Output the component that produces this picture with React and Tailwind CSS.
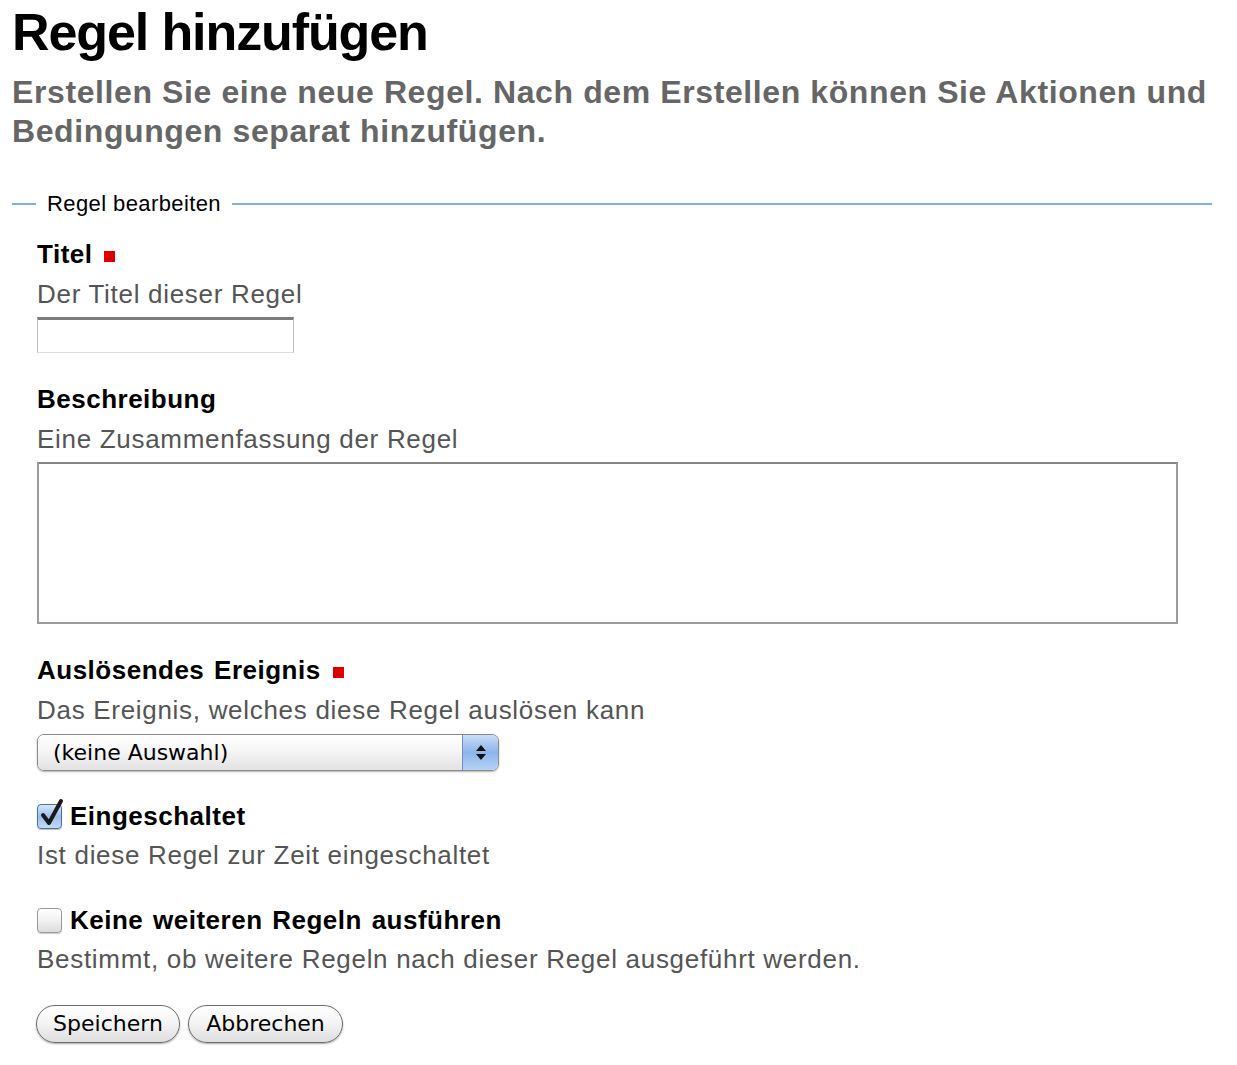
import React, { useState } from 'react';

// Rote Markierung fuer Pflichtfelder
const Required = () => (
  <span className="inline-block w-[11px] h-[11px] bg-[#dd0000] ml-[12px] mb-[1px] align-baseline" />
);

const Label = ({ children, required, tight }) => (
  <div
    className={
      (tight ? 'leading-[38px] ' : 'leading-[40px] ') +
      'text-[26px] font-bold text-black tracking-[0.5px] [word-spacing:2px]'
    }
  >
    {children}
    {required && <Required />}
  </div>
);

const Help = ({ children }) => (
  <div className="text-[26px] leading-[40px] text-[#555555] tracking-[0.7px]">{children}</div>
);

const AquaCheckbox = ({ checked, onChange }) => (
  <button
    type="button"
    onClick={onChange}
    className={
      checked
        ? 'relative w-[25px] h-[25px] rounded-[4px] border border-[#4a6fa5] bg-gradient-to-b from-[#d6e6fb] via-[#9cbfee] to-[#c2daf7] shadow-[0_1px_1px_rgba(0,0,0,0.25)] shrink-0'
        : 'relative w-[25px] h-[25px] rounded-[4px] border border-[#9a9a9a] bg-gradient-to-b from-[#ffffff] via-[#f1f1f1] to-[#dcdcdc] shadow-[0_1px_1px_rgba(0,0,0,0.2)] shrink-0'
    }
  >
    {checked && (
      <svg viewBox="0 0 26 30" className="absolute left-[1px] top-[-7px] w-[26px] h-[30px]">
        <path d="M4 17 L10 25 L22 3" fill="none" stroke="#1a1a1a" strokeWidth="4" strokeLinecap="round" strokeLinejoin="round" />
      </svg>
    )}
  </button>
);

const AquaButton = ({ children, className }) => (
  <button
    type="button"
    className={
      'h-[38px] rounded-full border border-[#6d6d6d] bg-gradient-to-b from-[#ffffff] via-[#f3f3f3] to-[#dedede] shadow-[0_1px_2px_rgba(0,0,0,0.35)] text-[22px] leading-none text-black ' +
      className
    }
    style={{ fontFamily: '"DejaVu Sans", sans-serif' }}
  >
    {children}
  </button>
);

const App = () => {
  const [title, setTitle] = useState('');
  const [description, setDescription] = useState('');
  const [enabled, setEnabled] = useState(true);
  const [stopAfter, setStopAfter] = useState(false);

  return (
    <div className="min-h-screen bg-white px-[12px]" style={{ fontFamily: '"Liberation Sans", Arial, sans-serif' }}>
      <h1 className="mt-[2px] text-[52px] leading-[60px] font-bold text-black tracking-[-1.1px]">Regel hinzufügen</h1>
      <p className="mt-[11px] w-[1200px] text-[32px] leading-[39px] font-bold text-[#666666] tracking-[0.6px]">
        Erstellen Sie eine neue Regel. Nach dem Erstellen können Sie Aktionen und Bedingungen separat hinzufügen.
      </p>

      <form className="w-[1200px] mt-[38px]">
        {/* Legende: Regel bearbeiten */}
        <div className="flex items-center h-[30px]">
          <div className="w-[24px] h-[2px] bg-[#7eb0e2]" />
          <span className="mx-[11px] text-[22px] leading-[30px] text-black tracking-[0.4px]">Regel bearbeiten</span>
          <div className="flex-1 h-[2px] bg-[#7eb0e2]" />
        </div>

        <div className="pl-[25px] pt-[15px]">
          <Label required>Titel</Label>
          <Help>Der Titel dieser Regel</Help>
          <input
            type="text"
            value={title}
            onChange={(e) => setTitle(e.target.value)}
            className="mt-[3px] block w-[257px] h-[36px] border border-[#c4c4c4] border-t-[3px] border-t-[#7c7c7c] border-b-[#dddddd] bg-white outline-none"
          />

          <div className="mt-[26px]">
            <Label>Beschreibung</Label>
            <Help>Eine Zusammenfassung der Regel</Help>
            <textarea
              value={description}
              onChange={(e) => setDescription(e.target.value)}
              className="mt-[3px] block w-[1141px] h-[162px] border-2 border-[#9c9c9c] border-t-[#858585] bg-white resize-none outline-none"
            />
          </div>

          <div className="mt-[26px]">
            <Label required>Auslösendes Ereignis</Label>
            <Help>Das Ereignis, welches diese Regel auslösen kann</Help>
            <div className="mt-[4px] flex w-[462px] h-[37px] rounded-[7px] border border-[#8a8a8a] overflow-hidden shadow-[0_1px_2px_rgba(0,0,0,0.3)]">
              <div
                className="flex-1 flex items-center pl-[15px] bg-gradient-to-b from-[#ffffff] via-[#f4f4f4] to-[#e2e2e2] text-[22px] text-black"
                style={{ fontFamily: '"DejaVu Sans", sans-serif' }}
              >
                (keine Auswahl)
              </div>
              <div className="w-[36px] flex flex-col items-center justify-center gap-[3px] border-l border-[#6f8fc4] bg-gradient-to-b from-[#c9ddf7] via-[#8db5ea] to-[#b5d2f5]">
                <svg viewBox="0 0 10 6" className="w-[10px] h-[6px]"><path d="M5 0 L10 6 L0 6 Z" fill="#111" /></svg>
                <svg viewBox="0 0 10 6" className="w-[10px] h-[6px]"><path d="M0 0 L10 0 L5 6 Z" fill="#111" /></svg>
              </div>
            </div>
          </div>

          <div className="mt-[26px]">
            <div className="flex items-center gap-[8px]">
              <AquaCheckbox checked={enabled} onChange={() => setEnabled(!enabled)} />
              <Label tight>Eingeschaltet</Label>
            </div>
            <Help>Ist diese Regel zur Zeit eingeschaltet</Help>
          </div>

          <div className="mt-[26px]">
            <div className="flex items-center gap-[8px]">
              <AquaCheckbox checked={stopAfter} onChange={() => setStopAfter(!stopAfter)} />
              <Label tight>Keine weiteren Regeln ausführen</Label>
            </div>
            <Help>Bestimmt, ob weitere Regeln nach dieser Regel ausgeführt werden.</Help>
          </div>

          <div className="mt-[26px] flex gap-[8px] -ml-[1px]">
            <AquaButton className="w-[144px]">Speichern</AquaButton>
            <AquaButton className="w-[155px]">Abbrechen</AquaButton>
          </div>
        </div>
      </form>
    </div>
  );
};

export default App;
